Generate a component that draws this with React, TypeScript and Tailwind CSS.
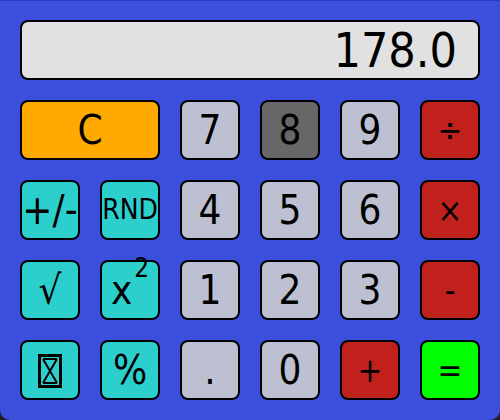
import React from 'react';

type Key = { label: React.ReactNode; kind: 'num' | 'op' | 'fn' | 'clear' | 'eq' | 'active'; wide?: boolean; size?: string };

const kindClass: Record<Key['kind'], string> = {
  num: 'bg-[#bcc0d0]',
  active: 'bg-[#676767]',
  op: 'bg-[#c0211d]',
  fn: 'bg-[#2ccfcc]',
  clear: 'bg-[#ffaa00]',
  eq: 'bg-[#00ff00]',
};

// boxed X glyph on the clear-entry key
const BoxX = () => (
  <svg width="24" height="34" viewBox="0 0 24 34" className="mt-[2px]">
    <rect x="1.5" y="1.5" width="21" height="31" fill="none" stroke="black" strokeWidth="3" />
    <path d="M5 5 L19 29 M19 5 L5 29 M5 5 H19 M5 29 H19" stroke="black" strokeWidth="2" fill="none" />
  </svg>
);

const keys: Key[] = [
  { label: 'C', kind: 'clear', wide: true },
  { label: '7', kind: 'num' },
  { label: '8', kind: 'active' },
  { label: '9', kind: 'num' },
  { label: '÷', kind: 'op', size: 'text-[33px]' },
  { label: '+/-', kind: 'fn' },
  { label: 'RND', kind: 'fn', size: 'text-[28px]' },
  { label: '4', kind: 'num' },
  { label: '5', kind: 'num' },
  { label: '6', kind: 'num' },
  { label: '×', kind: 'op', size: 'text-[33px]' },
  { label: '√', kind: 'fn' },
  {
    label: (
      <span>
        x<sup className="text-[26px] align-[0.55em] ml-[2px]">2</sup>
      </span>
    ),
    kind: 'fn',
  },
  { label: '1', kind: 'num' },
  { label: '2', kind: 'num' },
  { label: '3', kind: 'num' },
  { label: '-', kind: 'op', size: 'text-[33px]' },
  { label: <BoxX />, kind: 'fn' },
  { label: '%', kind: 'fn' },
  { label: '.', kind: 'num' },
  { label: '0', kind: 'num' },
  { label: '+', kind: 'op', size: 'text-[33px]' },
  { label: '=', kind: 'eq', size: 'text-[33px]' },
];

export default function App() {
  return (
    <div className="w-[500px] h-[420px] bg-[#1e1e1e] font-['DejaVu_Sans_Condensed','DejaVu_Sans',sans-serif]">
      <div className="h-full rounded-b-[10px] border-t border-[#2a3cc4] bg-[#3b4fdc] px-5 pt-[19px] pb-5">
        <div className="grid grid-cols-6 grid-rows-5 gap-5 h-full">
          <div className="col-span-6 flex items-center justify-end rounded-lg border-2 border-black bg-[#e1e1e1] pr-[21px] text-[48px] leading-none text-black">
            178.0
          </div>
          {keys.map((k, i) => (
            <button
              key={i}
              className={`flex items-center justify-center rounded-lg border-2 border-black leading-none text-black ${
                k.size ?? 'text-[40px]'
              } ${k.wide ? 'col-span-2' : ''} ${kindClass[k.kind]}`}
            >
              {k.label}
            </button>
          ))}
        </div>
      </div>
    </div>
  );
}
